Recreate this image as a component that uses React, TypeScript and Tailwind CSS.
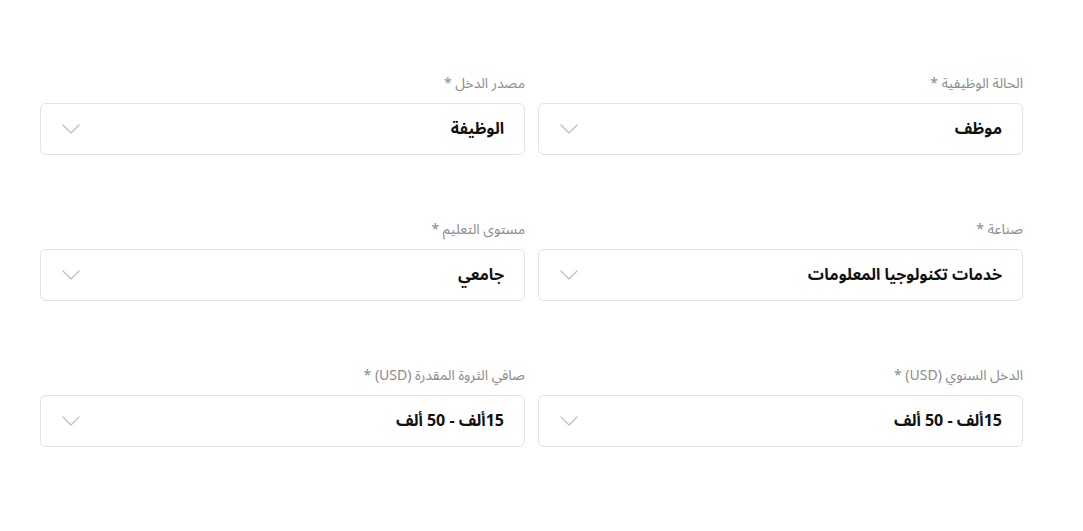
const fields = [
  { label: 'الحالة الوظيفية *', value: 'موظف' },
  { label: 'مصدر الدخل *', value: 'الوظيفة' },
  { label: 'صناعة *', value: 'خدمات تكنولوجيا المعلومات' },
  { label: 'مستوى التعليم *', value: 'جامعي' },
  { label: 'الدخل السنوي (USD) *', value: '15ألف - 50 ألف' },
  { label: 'صافي الثروة المقدرة (USD) *', value: '15ألف - 50 ألف' },
];

function Chevron() {
  return (
    <svg width="18" height="10" viewBox="0 0 18 10" fill="none" className="shrink-0">
      <path d="M1 1l8 8 8-8" stroke="#bdbdbd" strokeWidth="1.2" strokeLinecap="round" strokeLinejoin="round" />
    </svg>
  );
}

function SelectField({ label, value }: { label: string; value: string }) {
  return (
    <div className="flex flex-col">
      <label className="text-[14px] leading-5 text-[#8c8c8c] mb-[9px]">{label}</label>
      <div className="h-[52px] flex items-center justify-between rounded-md border border-[#e3e3e3] bg-white pr-5 pl-[21px]">
        <span className="text-[16px] font-bold text-[#111]">{value}</span>
        <Chevron />
      </div>
    </div>
  );
}

export default function App() {
  return (
    <div
      dir="rtl"
      className="min-h-[531px] bg-white pt-[74px] pr-[60px] pl-10"
      style={{ fontFamily: '"Noto Sans Arabic", "Noto Sans", "DejaVu Sans", sans-serif' }}
    >
      <div className="grid grid-cols-2 gap-x-[13px] gap-y-[65px] w-[983px]">
        {fields.map((f) => (
          <SelectField key={f.label} label={f.label} value={f.value} />
        ))}
      </div>
    </div>
  );
}
